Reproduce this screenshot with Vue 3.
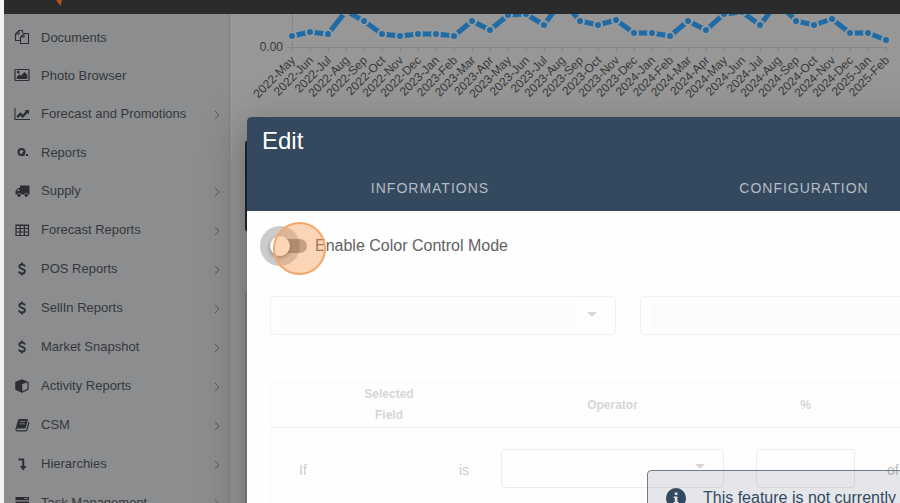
<script setup>
import { ref, computed } from 'vue'

const menu = [
  { label: 'Documents', icon: 'files' },
  { label: 'Photo Browser', icon: 'image' },
  { label: 'Forecast and Promotions', icon: 'chart', children: true },
  { label: 'Reports', icon: 'search' },
  { label: 'Supply', icon: 'truck', children: true },
  { label: 'Forecast Reports', icon: 'table', children: true },
  { label: 'POS Reports', icon: 'dollar', children: true },
  { label: 'SellIn Reports', icon: 'dollar', children: true },
  { label: 'Market Snapshot', icon: 'dollar', children: true },
  { label: 'Activity Reports', icon: 'cube', children: true },
  { label: 'CSM', icon: 'book', children: true },
  { label: 'Hierarchies', icon: 'level', children: true },
  { label: 'Task Management', icon: 'tasks', children: true }
]

// 16x16 grid: "line" is stroked with width "w", "solid" is filled
const icons = {
  files: {
    line: 'M8.500 4V1.500H5L1.500 5v6.500h5M5 1.500V5H1.500M10 4.500h4.500v10h-8V8zM10 4.500V8H6.500',
    w: 1.1
  },
  image: {
    line: 'M1.500 2.500h13q.5 0 .5.5v10q0 .5-.5.5h-13Q1 13.500 1 13V3q0-.5.500-.5z',
    w: 1.2,
    solid: 'M2.800 12v-2l2.700-2.700L7 8.800L10.500 5L13.300 7.800V12zM2.800 5.200a1.400 1.400 0 1 0 2.800 0a1.400 1.400 0 1 0-2.800 0z'
  },
  chart: {
    line: 'M1 2v11.500h15',
    w: 1.1,
    solid: 'M2.500 10.300L6.300 6.200L8.800 8.500L11.800 5.300L10.600 4H15v4.300L13.700 7.100L8.800 12L6.300 9.500L4 12z'
  },
  search: {
    line: 'M10.500 8a3 3 0 1 1-6 0a3 3 0 1 1 6 0zM9.500 8v4',
    w: 2,
    solid: 'M12 10h2v2h-2z'
  },
  truck: {
    solid: 'M6 2.500h9.500v9h-1.300a2.100 2.100 0 0 0-4 0H7.100a2.100 2.100 0 0 0-4 0H1.500V7.700L4 5h2zM5.200 6H4.500L2.800 8h2.400zM3.300 12.200a1.700 1.700 0 1 0 3.400 0a1.700 1.700 0 1 0-3.400 0zM10.500 12.200a1.700 1.700 0 1 0 3.400 0a1.700 1.700 0 1 0-3.400 0z'
  },
  table: {
    line: 'M2 3h12.500v10.500H2zM2 6.500h12.500M2 10h12.500M6.200 3v10.500M10.400 3v10.500M2 3.500h12.500',
    w: 1.2
  },
  dollar: {
    line: 'M11 5.500C10.500 4 9.500 3.500 8 3.500C6.500 3.500 5.300 4.200 5.300 5.600C5.300 8.500 10.900 7 10.900 10.200C10.900 11.700 9.600 12.500 8 12.500C6.500 12.500 5.300 11.900 4.900 10.500M8 1.500v2M8 12.500v2',
    w: 1.8
  },
  cube: {
    line: 'M8 2L14 4.300V11.300L8 14L2 11.300V4.300z',
    w: 1.2,
    solid: 'M8 1.500L13.800 3.900L8 6.300L8.500 14.500L1.500 11.500V4z'
  },
  book: {
    line: 'M15 4.800L13 12.500q-.3 1.300-1.300 1.300H3q-1.200 0-1.200-1.800',
    w: 1.2,
    solid: 'M5.500 2H13q1.200 0 .9 1L11.700 10.500q-.3 1-1.300 1H3.500q-1 0-1 .8Q1.300 12 1.700 11L4.100 3Q4.500 2 5.500 2zM6.400 4.200L6.100 5h5l.3-.8zM5.800 6.500L5.500 7.300h5l.3-.8z'
  },
  level: {
    line: 'M4.500 3.500h4.700v7',
    w: 2,
    solid: 'M5.800 10h6.800L9.200 14.500z'
  },
  tasks: {
    solid: 'M1.500 2H15v3.200H1.500zM10 3.200v.8h3.800v-.8zM1.500 6.500H15v3.200H1.500zM1.500 11H15v3.200H1.500z'
  }
}

const months = ['Jan', 'Feb', 'Mar', 'Apr', 'May', 'Jun', 'Jul', 'Aug', 'Sep', 'Oct', 'Nov', 'Dec']
const values = [
  11, 15, 13, 36, 26, 13, 11, 13, 13, 11, 26, 17, 32, 33, 22, 47, 26,
  22, 27, 14, 14, 11, 26, 17, 33, 35, 22, 45, 26, 22, 28, 14, 14, 7
]

const points = computed(() => values.map((v, i) => ({
  x: 62 + i * 18,
  y: 33 - v,
  // series starts in May 2022
  label: `${2022 + Math.floor((i + 4) / 12)}-${months[(i + 4) % 12]}`
})))
const line = computed(() => points.value.map((p) => `${p.x},${p.y}`).join(' '))

const colorMode = ref(false)
</script>

<template>
  <div class="page">
    <header class="topbar">
      <svg class="brand" width="8" height="7" viewBox="0 0 8 7">
        <path d="M0 0H6L4.500 6z" fill="#b5531c" />
      </svg>
    </header>

    <div class="layout">
      <nav class="sidebar">
        <a v-for="item in menu" :key="item.label" href="#" class="item" :class="{ group: item.children }">
          <svg class="icon" viewBox="0 0 16 16">
            <path
              v-if="icons[item.icon].line"
              :d="icons[item.icon].line"
              :stroke-width="icons[item.icon].w"
              fill="none"
              stroke="currentColor"
            />
            <path v-if="icons[item.icon].solid" :d="icons[item.icon].solid" fill="currentColor" fill-rule="evenodd" />
          </svg>
          <span class="label">{{ item.label }}</span>
          <svg v-if="item.children" class="chevron" viewBox="0 0 6 10">
            <path d="M1 1L5 5L1 9" fill="none" stroke="currentColor" />
          </svg>
        </a>
      </nav>

      <main class="content">
        <svg class="chart" height="100">
          <path class="axis" d="M62.500 0V33M57 33.500H657" />
          <path v-for="p in points" :key="'t' + p.x" class="axis" :d="`M${p.x + 0.5} 33v5`" />
          <text class="tick" x="53" y="37" text-anchor="end">0.00</text>
          <text
            v-for="p in points"
            :key="p.label"
            class="tick"
            text-anchor="end"
            :transform="`translate(${p.x + 4} 47) rotate(-45)`"
          >{{ p.label }}</text>
          <polyline :points="line" class="series" />
          <circle v-for="p in points" :key="'c' + p.x" :cx="p.x" :cy="p.y" r="4" class="dot" />
        </svg>
        <div class="card dark"></div>
        <div class="card"></div>
      </main>
    </div>

    <section class="dialog" role="dialog" aria-labelledby="dialog-title">
      <div class="dialog-head">
        <h2 id="dialog-title">Edit</h2>
        <div class="tabs" role="tablist">
          <button type="button" role="tab">INFORMATIONS</button>
          <button type="button" role="tab">CONFIGURATION</button>
        </div>
      </div>

      <div class="dialog-body">
        <label class="switch">
          <input v-model="colorMode" type="checkbox">
          <span class="track"><span class="thumb"></span></span>
          <span>Enable Color Control Mode</span>
          <span class="pointer"></span>
        </label>

        <div class="fields">
          <div class="select shaded">
            <select aria-label="Field" disabled></select>
            <span class="arrow"></span>
          </div>
          <div class="select shaded">
            <select aria-label="Compared field" disabled></select>
            <span class="arrow"></span>
          </div>
        </div>

        <table class="rules">
          <colgroup>
            <col class="c-if"><col class="c-field"><col class="c-is"><col class="c-operator"><col class="c-percent"><col>
          </colgroup>
          <thead>
            <tr>
              <th></th>
              <th>Selected Field</th>
              <th></th>
              <th>Operator</th>
              <th>%</th>
              <th></th>
            </tr>
          </thead>
          <tbody>
            <tr>
              <td>If</td>
              <td></td>
              <td>is</td>
              <td>
                <div class="select">
                  <select aria-label="Operator" disabled></select>
                  <span class="arrow"></span>
                </div>
              </td>
              <td><input class="percent" type="text" aria-label="%" disabled></td>
              <td class="of">of</td>
            </tr>
          </tbody>
        </table>
      </div>
    </section>

    <div class="notice" role="status">
      <svg class="info" viewBox="0 0 20 20">
        <circle cx="10" cy="10" r="10" fill="#34495e" />
        <path d="M8.800 4.500h2.600v2.400H8.800zM7.700 8.500h3.700v5.500h1.100v1.500H7.500V14h1.300v-4H7.700z" fill="#e3e7eb" />
      </svg>
      <span>This feature is not currently</span>
    </div>
  </div>
</template>

<style>
body {
  margin: 0;
  background: #f4f4f4;
}
</style>

<style scoped>
.page {
  position: relative;
  display: flex;
  flex-direction: column;
  height: 100vh;
  padding-left: 4px;
  overflow: hidden;
  box-sizing: border-box;
  font-family: "Liberation Sans", Arial, sans-serif;
}

.topbar {
  flex: none;
  height: 14px;
  padding-left: 52px;
  box-sizing: border-box;
  background: #292b2d;
}

.brand {
  display: block;
}

.layout {
  display: flex;
  flex: 1;
  min-height: 0;
}

/* sidebar */
.sidebar {
  flex: none;
  width: 226px;
  padding-top: 4px;
  box-sizing: border-box;
  background: #8b8d8f;
  border-right: 1px solid #7e8082;
  overflow: hidden;
}

.item {
  display: flex;
  align-items: center;
  height: 38px;
  padding: 0 9px 0 10px;
  color: #36383b;
  font-size: 13px;
  text-decoration: none;
}

.item.group {
  height: 39px;
}

.icon {
  width: 16px;
  height: 16px;
  margin-right: 11px;
  color: #2c2e31;
}

.label {
  flex: 1;
}

.chevron {
  width: 6px;
  height: 10px;
  margin-top: 2px;
  color: #55575a;
}

/* page content behind the dialog */
.content {
  flex: 1;
  min-width: 0;
  background: #979797;
  overflow: hidden;
}

.chart {
  display: block;
  width: 100%;
}

.axis {
  stroke: #868686;
}

.tick {
  fill: #37393b;
  font-size: 12px;
}

.series {
  fill: none;
  stroke: #1e6ba5;
  stroke-width: 5;
}

.dot {
  fill: #1e6ba5;
  stroke: #9a9a9a;
  stroke-width: 2;
}

.card {
  height: 220px;
  margin: 58px 0 0 15px;
  background: #858787;
  border-radius: 4px;
}

.card.dark {
  height: 92px;
  margin-top: 26px;
  background: #1d2731;
}

/* dialog */
.dialog {
  position: absolute;
  top: 117px;
  left: 247px;
  right: -109px;
  bottom: -80px;
  background: #fefefe;
  border-radius: 4px;
  box-shadow: 0 11px 15px -7px rgba(0, 0, 0, 0.2), 0 24px 38px 3px rgba(0, 0, 0, 0.14), 0 9px 46px 8px rgba(0, 0, 0, 0.12);
}

.dialog-head {
  background: #34495e;
  border-radius: 4px 4px 0 0;
}

.dialog-head h2 {
  margin: 0;
  padding-left: 15px;
  color: #fff;
  font-size: 24px;
  font-weight: 400;
  line-height: 47px;
}

.tabs {
  display: grid;
  grid-template-columns: 366px 382px;
}

.tabs button {
  height: 47px;
  padding: 0;
  border: 0;
  background: none;
  color: #b4bcc4;
  font-family: inherit;
  font-size: 14px;
  letter-spacing: 1px;
}

.dialog-body {
  padding: 15px 23px;
}

.switch {
  position: relative;
  display: flex;
  align-items: center;
  height: 40px;
  margin-bottom: 30px;
  color: #636363;
  font-size: 16px;
}

.switch input {
  position: absolute;
  opacity: 0;
}

.track {
  position: relative;
  width: 34px;
  height: 14px;
  margin: 0 8px 0 3px;
  border-radius: 7px;
  background: #a6a6a6;
}

.thumb {
  position: absolute;
  top: -3px;
  left: -3px;
  width: 20px;
  height: 20px;
  border-radius: 50%;
  background: #fff;
  box-shadow: 0 0 0 10px rgba(0, 0, 0, 0.2), 0 2px 4px rgba(0, 0, 0, 0.4);
}

.pointer {
  position: absolute;
  top: -4px;
  left: 3px;
  width: 49px;
  height: 49px;
  border: 2px solid #f4a768;
  border-radius: 50%;
  background: rgba(250, 150, 75, 0.4);
}

.fields {
  display: grid;
  grid-template-columns: 1fr 1fr;
  gap: 24px;
  margin-bottom: 47px;
}

.select {
  display: flex;
  align-items: center;
  height: 39px;
  padding: 4px 18px 4px 10px;
  box-sizing: border-box;
  border: 1px solid #ececec;
  border-radius: 4px;
}

.select select {
  flex: 1;
  min-width: 0;
  height: 100%;
  border: 0;
  appearance: none;
  background: none;
}

.select.shaded {
  border-color: #f1f1f1;
}

.select.shaded select {
  background: #fbfbfb;
}

.arrow {
  margin: 0 0 3px 11px;
  border: 5px solid transparent;
  border-top-color: #d8d8d8;
  border-bottom: 0;
}

.rules {
  width: 100%;
  table-layout: fixed;
  border-collapse: separate;
  border-spacing: 0;
  border: 1px solid #f8f8f8;
  border-radius: 4px;
  color: #cdcdcd;
  font-size: 14px;
  text-align: center;
}

.c-if { width: 64px; }
.c-field { width: 108px; }
.c-is { width: 42px; }
.c-operator { width: 255px; }
.c-percent { width: 131px; }

.rules th {
  height: 44px;
  padding: 0 20px;
  border-bottom: 1px solid #f0f0f0;
  color: #d6d6d6;
  font-size: 12px;
  line-height: 21px;
}

.rules td {
  height: 76px;
  padding: 0 16px;
}

.rules td:nth-child(-n + 3) {
  padding: 4px 0 0;
}

.rules .of {
  padding-top: 4px;
  text-align: left;
  color: #bfbfbf;
}

.percent {
  width: 100%;
  height: 39px;
  box-sizing: border-box;
  border: 1px solid #ececec;
  border-radius: 4px;
  background: none;
}

/* notice over the dialog */
.notice {
  position: absolute;
  top: 470px;
  left: 647px;
  right: -160px;
  display: flex;
  align-items: center;
  gap: 17px;
  height: 56px;
  padding-left: 18px;
  box-sizing: border-box;
  border: 1px solid #6f7b88;
  border-radius: 4px;
  background: rgba(52, 73, 94, 0.13);
  color: #34495e;
  font-size: 16px;
}

.info {
  width: 20px;
  height: 20px;
}
</style>
